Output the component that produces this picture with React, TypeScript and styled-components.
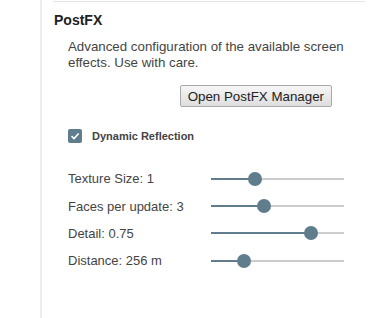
import React from 'react';
import styled, { createGlobalStyle } from 'styled-components';

const GlobalStyle = createGlobalStyle`
  html, body {
    margin: 0;
    padding: 0;
    background: #fff;
  }
  body {
    font-family: "Liberation Sans", Arial, sans-serif;
  }
`;

const Page = styled.div`
  display: flex;
  height: 318px;
  width: 375px;
  overflow: hidden;
`;

const Gutter = styled.div`
  width: 40px;
  flex: none;
`;

const Sidebar = styled.div`
  flex: 1;
  border-left: 2px solid #ededed;
  padding: 1px 10px 0 11px;
`;

const Section = styled.section`
  border-top: 1px solid #e4e4e4;
  width: 312px;
`;

const Heading = styled.h3`
  margin: 10px 0 0 1px;
  font-size: 14px;
  line-height: 16px;
  font-weight: bold;
  color: #222;
`;

const Body = styled.div`
  padding-left: 15px;
`;

const Description = styled.p`
  margin: 11px 0 0;
  font-size: 13.3px;
  line-height: 16px;
  color: #444;
  width: 290px;
`;

const ButtonRow = styled.div`
  display: flex;
  justify-content: flex-end;
  padding-right: 33px;
  margin-top: 14px;
`;

const Button = styled.button`
  height: 22px;
  padding: 0 7px;
  font-family: "Liberation Sans", Arial, sans-serif;
  font-size: 13.33px;
  color: #222;
  background: linear-gradient(#f6f6f6, #dedede);
  border: 1px solid #a9a9a9;
  border-radius: 2px;
`;

const CheckRow = styled.label`
  display: flex;
  align-items: center;
  gap: 10px;
  margin-top: 22px;
  height: 14px;
`;

const CheckBox = styled.span`
  width: 14px;
  height: 14px;
  border-radius: 2px;
  background: #5f7d8c;
  display: flex;
  align-items: center;
  justify-content: center;
`;

const CheckLabel = styled.span`
  font-size: 11px;
  font-weight: bold;
  color: #444;
`;

const Sliders = styled.div`
  margin-top: 22px;
  display: flex;
  flex-direction: column;
`;

const SliderRow = styled.div`
  display: grid;
  grid-template-columns: 143px 133px;
  align-items: center;
  height: 27.4px;
`;

const SliderLabel = styled.span`
  font-size: 13px;
  color: #444;
`;

const Track = styled.div`
  position: relative;
  height: 2px;
  background: #cccccc;
`;

const Fill = styled.div`
  height: 100%;
  background: #5f7d8c;
`;

const Thumb = styled.div`
  position: absolute;
  top: 50%;
  width: 14px;
  height: 14px;
  margin: -7px 0 0 -7px;
  border-radius: 50%;
  background: #5f7d8c;
`;

function Slider({ label, value }: { label: string; value: number }) {
  const pct = `${value * 100}%`;
  return (
    <SliderRow>
      <SliderLabel>{label}</SliderLabel>
      <Track>
        <Fill style={{ width: pct }} />
        <Thumb style={{ left: pct }} />
      </Track>
    </SliderRow>
  );
}

export default function App() {
  return (
    <>
      <GlobalStyle />
      <Page>
        <Gutter />
        <Sidebar>
          <Section>
            <Heading>PostFX</Heading>
            <Body>
              <Description>
                Advanced configuration of the available screen effects. Use with care.
              </Description>
              <ButtonRow>
                <Button>Open PostFX Manager</Button>
              </ButtonRow>
              <CheckRow>
                <CheckBox>
                  <svg width="10" height="10" viewBox="0 0 10 10">
                    <path d="M1.5 5.2 L4 7.5 L8.6 2.5" fill="none" stroke="#fff" strokeWidth="1.6" />
                  </svg>
                </CheckBox>
                <CheckLabel>Dynamic Reflection</CheckLabel>
              </CheckRow>
              <Sliders>
                <Slider label="Texture Size: 1" value={1 / 3} />
                <Slider label="Faces per update: 3" value={0.4} />
                <Slider label="Detail: 0.75" value={0.75} />
                <Slider label="Distance: 256 m" value={0.25} />
              </Sliders>
            </Body>
          </Section>
        </Sidebar>
      </Page>
    </>
  );
}
